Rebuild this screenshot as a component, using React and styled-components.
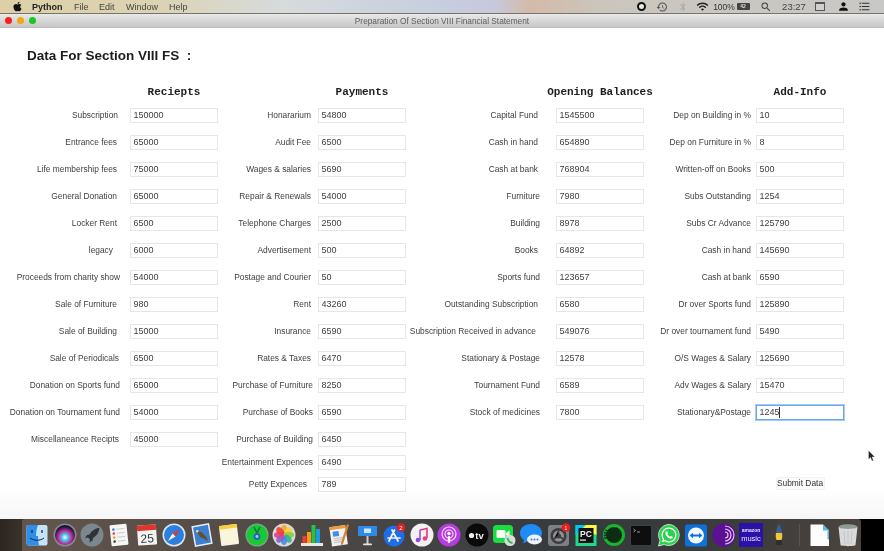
import React from "react";
import styled, { createGlobalStyle } from "styled-components";
import { FaApple } from "react-icons/fa";
import { MdBluetooth, MdWifi, MdHistory, MdSearch, MdPerson, MdFormatListBulleted } from "react-icons/md";

const Global = createGlobalStyle`
  html, body { margin: 0; padding: 0; background: #fff; overflow: hidden; }
  * { box-sizing: border-box; }
`;

const Screen = styled.div`
  width: 884px;
  height: 551px;
  display: flex;
  flex-direction: column;
  overflow: hidden;
  position: relative;
  font-family: "Liberation Sans", Arial, sans-serif;
  filter: blur(0.5px);
`;

const MenuBar = styled.header`
  height: 14px;
  flex: none;
  display: flex;
  align-items: center;
  justify-content: space-between;
  font-size: 9px;
  color: #333;
  background: linear-gradient(90deg, #ddd0a6 0%, #dcd3b4 18%, #d6dbdc 32%, #c6cede 50%, #c8c8dc 56%, #d3baa8 60%, #cbc6bd 68%, #c8c8c6 100%);
  border-bottom: 1px solid #77746c;
`;

const MenuLeft = styled.nav`
  display: flex;
  align-items: center;
  padding-left: 12px;
`;

const MenuItem = styled.span`
  width: ${(p) => p.$w}px;
  font-weight: ${(p) => (p.$bold ? 700 : 400)};
  color: ${(p) => (p.$bold ? "#222" : "#444")};
  white-space: nowrap;
`;

const AppleSlot = styled.span`
  width: 20px;
  display: flex;
  color: #111;
  font-size: 11px;
`;

const Tray = styled.div`
  display: flex;
  align-items: center;
  padding-right: 10px;
`;

const TrayItem = styled.span`
  width: ${(p) => p.$w}px;
  margin-left: ${(p) => p.$ml || 0}px;
  display: flex;
  align-items: center;
  justify-content: center;
  color: ${(p) => p.$color || "#333"};
  font-size: ${(p) => p.$fs || 9}px;
  white-space: nowrap;
`;

const RecordDot = styled.span`
  width: 9px;
  height: 9px;
  border-radius: 50%;
  border: 2.5px solid #111;
  background: #e8e8e8;
`;

const Battery = styled.span`
  width: 13px;
  height: 7px;
  background: #444;
  border-radius: 1px;
  color: #ddd;
  font-size: 5px;
  font-weight: 700;
  line-height: 7px;
  text-align: center;
`;

const BoxIcon = styled.span`
  width: 10px;
  height: 9px;
  border: 1px solid #555;
  border-top-width: 2.5px;
  background: #d0d0d0;
`;

const TitleBar = styled.div`
  height: 14px;
  flex: none;
  display: grid;
  grid-template-columns: 1fr auto 1fr;
  align-items: center;
  background: linear-gradient(#e9e9e9, #c6c6c6);
  border-bottom: 1px solid #bdbdbd;
`;

const Lights = styled.div`
  display: flex;
  gap: 5px;
  padding-left: 4.5px;
`;

const Light = styled.span`
  width: 7px;
  height: 7px;
  border-radius: 50%;
  background: ${(p) => p.$c};
`;

const WindowTitle = styled.div`
  font-size: 8.3px;
  color: #5c5c5c;
  white-space: nowrap;
`;

const Content = styled.main`
  flex: 1;
  min-height: 0;
  background: linear-gradient(#fff 0, #fff 94%, #f6f6f6 100%);
  position: relative;
`;

const PageTitle = styled.h1`
  margin: 20px 0 0 27px;
  height: 16px;
  font-size: 13.5px;
  line-height: 16px;
  font-weight: 700;
  color: #1c1c1c;
  white-space: pre;
`;

const Form = styled.form`
  display: flex;
  margin-top: 20px;
`;

const Column = styled.section`
  display: flex;
  flex-direction: column;
  width: ${(p) => p.$label + 88}px;
`;

const Heading = styled.h2`
  margin: 0 0 1.5px ${(p) => p.$label - 20}px;
  width: 128px;
  height: 16px;
  text-align: center;
  font-family: "Liberation Mono", "Courier New", monospace;
  font-size: 11px;
  line-height: 16px;
  font-weight: 700;
  color: #1e1e1e;
  white-space: nowrap;
`;

const Row = styled.div`
  display: grid;
  grid-template-columns: ${(p) => p.$label}px 88px;
  height: ${(p) => p.$h || 27}px;
  align-items: center;
  margin-top: ${(p) => p.$mt || 0}px;
`;

const Label = styled.label`
  justify-self: end;
  padding-right: ${(p) => p.$pad}px;
  font-size: 8.4px;
  color: #3e3e3e;
  white-space: nowrap;
`;

const FieldWrap = styled.div`
  position: relative;
  height: 15px;
`;

const Field = styled.input`
  display: block;
  width: 88px;
  height: 15px;
  padding: 0 2.5px;
  border: 1px solid ${(p) => (p.$focus ? "#6aa8ec" : "#e6e6e6")};
  box-shadow: ${(p) => (p.$focus ? "0 0 0 1px #a5cbf3" : "none")};
  outline: none;
  background: #fff;
  font-family: "Liberation Sans", Arial, sans-serif;
  font-size: 9px;
  color: #3e3e3e;
`;

const Caret = styled.span`
  position: absolute;
  left: 23px;
  top: 2px;
  width: 1px;
  height: 11px;
  background: #333;
`;

const SubmitRow = styled.div`
  display: flex;
  justify-content: center;
  margin: 51px 0 0 ${(p) => p.$label}px;
  width: 88px;
`;

const Submit = styled.button`
  height: 13px;
  width: 49px;
  padding: 0;
  border: 1px solid #f2f2f2;
  border-radius: 2px;
  background: #fbfbfb;
  font-family: "Liberation Sans", Arial, sans-serif;
  font-size: 8.4px;
  color: #333;
  white-space: nowrap;
`;

const Pointer = styled.svg`
  position: absolute;
  left: 868px;
  top: 422px;
`;

const DockStrip = styled.footer`
  height: 32px;
  flex: none;
  display: flex;
  background: linear-gradient(90deg, #2c2621 0, #3a322b 22px, #000 861px);
`;

const Dock = styled.div`
  margin-left: 22px;
  flex: none;
  display: flex;
  align-items: flex-start;
  padding: 4px 0 0 1.3px;
  border-top-left-radius: 3px;
  border-top-right-radius: 3px;
  background: linear-gradient(90deg, #62554c 0%, #544c47 25%, #424243 50%, #343a3c 65%, #3c3c3b 85%, #4c443e 100%);
`;

const DockSlot = styled.div`
  width: 27.48px;
  height: 24px;
  display: flex;
  justify-content: center;
  flex: none;
`;

const DockDivider = styled.div`
  width: 1px;
  height: 22px;
  margin: 1px 6.5px 0;
  background: #555;
  flex: none;
`;

const Ico = ({ children }) => (
  <svg width="24" height="24" viewBox="0 0 24 24">{children}</svg>
);

const icons = [
  <Ico key="finder">
    <rect x="1.5" y="2" width="21" height="20.5" rx="2" fill="#c5e3f8" />
    <path d="M3.5 2H13c-1.5 4-2 7-2 11h2c0 3 .3 6 1 9.5H3.5a2 2 0 0 1-2-2V4a2 2 0 0 1 2-2z" fill="#2f8eea" />
    <path d="M7 7v3M17 7v3" stroke="#123" strokeWidth="1.2" />
    <path d="M5 15c4 3 10 3 14 0" stroke="#123" strokeWidth="1" fill="none" />
  </Ico>,
  <Ico key="siri">
    <defs>
      <radialGradient id="sg" cx="50%" cy="62%" r="55%">
        <stop offset="0" stopColor="#fff" />
        <stop offset=".3" stopColor="#3ec7e8" />
        <stop offset=".6" stopColor="#c42ca0" />
        <stop offset="1" stopColor="#151530" />
      </radialGradient>
    </defs>
    <circle cx="12" cy="12" r="11.5" fill="#8b8790" />
    <circle cx="12" cy="12" r="10" fill="url(#sg)" />
  </Ico>,
  <Ico key="launch">
    <circle cx="12" cy="12" r="11.5" fill="#7b878d" />
    <path d="M18.5 5c-4 .6-7 3-9 6.5L7 12l-2 3 3-.5 2 2-.5 3 3-2 .5-2.5c3.5-2 5.7-5 6.5-10z" fill="#2d3439" />
  </Ico>,
  <Ico key="reminders">
    <g transform="rotate(-6 12 12)">
      <rect x="3.5" y="1.5" width="17" height="21" rx="1" fill="#f6f6f6" />
      <circle cx="7" cy="6" r="1.3" fill="#3a7ee0" />
      <circle cx="7" cy="10" r="1.3" fill="#e0443a" />
      <circle cx="7" cy="14" r="1.3" fill="#ef9a2a" />
      <circle cx="7" cy="18" r="1.3" fill="#333" />
      <path d="M10 6h8M10 10h8M10 14h8M10 18h8" stroke="#bbb" strokeWidth=".7" />
    </g>
  </Ico>,
  <Ico key="cal">
    <g transform="rotate(-4 12 12)">
      <rect x="2.5" y="2" width="19" height="20" rx="1" fill="#f4f4f4" />
      <path d="M2.5 3a1 1 0 0 1 1-1h17a1 1 0 0 1 1 1v4.500h-19z" fill="#e3342c" />
      <text x="12" y="19.500" textAnchor="middle" fontSize="12" fontFamily="Liberation Sans" fill="#333">25</text>
    </g>
  </Ico>,
  <Ico key="safari">
    <circle cx="12" cy="12" r="11.500" fill="#dfe6ee" />
    <circle cx="12" cy="12" r="10" fill="#2c7fe0" />
    <path d="M18 6l-7.500 4.500L12 12z" fill="#f0352c" />
    <path d="M18 6l-4.500 7.500L12 12z" fill="#e8312a" />
    <path d="M6 18l4.500-7.500L13.500 13.500z" fill="#f4f4f4" />
  </Ico>,
  <Ico key="preview">
    <g transform="rotate(-10 12 12)">
      <rect x="3" y="1.500" width="18" height="21" fill="#e8eef6" />
      <rect x="4.500" y="3" width="15" height="18" fill="#3b7fd0" />
      <path d="M7 7l5 2 4 6 1 4-5-4-2-1-2-5z" fill="#6a4c2e" />
      <circle cx="8" cy="7.500" r="1.300" fill="#e8dcc0" />
    </g>
  </Ico>,
  <Ico key="notes">
    <g transform="rotate(-7 12 12)">
      <rect x="3" y="2" width="18" height="20" rx="1" fill="#faf6dc" />
      <path d="M3 3a1 1 0 0 1 1-1h16a1 1 0 0 1 1 1v2.500H3z" fill="#f5cf3c" />
    </g>
  </Ico>,
  <Ico key="green">
    <circle cx="12" cy="12" r="11.500" fill="#7fa38a" />
    <circle cx="12" cy="12" r="10.300" fill="#14cc32" />
    <path d="M9 4l3 6 3-6" stroke="#1c6f3a" strokeWidth="1.500" fill="none" />
    <circle cx="12" cy="13.500" r="3.500" fill="#2f62c4" />
    <circle cx="12" cy="13.500" r="1.400" fill="#9fd0ee" />
  </Ico>,
  <Ico key="photos">
    <circle cx="12" cy="12" r="11.500" fill="#dcd8d6" />
    {["#f5a623", "#f7d13c", "#8ccb3f", "#36b38a", "#3f8fe0", "#8a5cd0", "#e03f8f", "#ee3f3a"].map((c, i) => (
      <ellipse key={c} cx="12" cy="6.800" rx="3" ry="4.800" fill={c} opacity=".9" transform={`rotate(${i * 45} 12 12)`} />
    ))}
  </Ico>,
  <Ico key="numbers">
    <path d="M1 20h22v3H1z" fill="#e8e8e8" />
    <rect x="2.500" y="13" width="4" height="7" fill="#f03c2e" />
    <rect x="7" y="9" width="4" height="11" fill="#f59a1f" />
    <rect x="11.500" y="2" width="4" height="18" fill="#25c244" />
    <rect x="16" y="6" width="4" height="14" fill="#1f9ae0" />
  </Ico>,
  <Ico key="pages">
    <g transform="rotate(-8 12 12)">
      <rect x="3.500" y="3" width="16" height="19.500" fill="#f2f2f2" />
      <path d="M3.500 3h16v3h-16z" fill="#ed9a3c" />
      <rect x="6" y="8" width="6" height="5" fill="#3f8fe0" />
      <path d="M6 15h11M6 17h11M6 19h8" stroke="#aaa" strokeWidth=".7" />
    </g>
    <path d="M22 2L16 21l-1.500 2 -.5-3L20 1z" fill="#d9822b" />
  </Ico>,
  <Ico key="keynote">
    <rect x="3" y="3" width="19" height="10" fill="#2c8be8" />
    <rect x="9" y="5.500" width="7" height="4.500" fill="#cfe4f7" />
    <rect x="11.500" y="13" width="2" height="8" fill="#c8ccd0" />
    <rect x="8" y="20.500" width="9" height="1.800" rx=".8" fill="#e4e4e4" />
  </Ico>,
  <Ico key="appstore">
    <circle cx="12" cy="13" r="10.500" fill="#1c6fe8" />
    <path d="M12.500 7L7 18M10 7l6 11M6 15h12" stroke="#f4f4f4" strokeWidth="1.700" strokeLinecap="round" fill="none" />
    <circle cx="19" cy="4.500" r="4.300" fill="#e0201c" />
    <text x="19" y="6.800" textAnchor="middle" fontSize="6" fontFamily="Liberation Sans" fill="#fff">2</text>
  </Ico>,
  <Ico key="music">
    <circle cx="12" cy="12" r="11.500" fill="#f2f2f4" />
    <path d="M10 7l7-1.500V15" stroke="#e43a7a" strokeWidth="1.600" fill="none" />
    <path d="M10 7v10" stroke="#a04ae0" strokeWidth="1.600" />
    <circle cx="8" cy="17" r="2.300" fill="#8a4ae0" />
    <circle cx="15" cy="15.500" r="2.300" fill="#e8407a" />
  </Ico>,
  <Ico key="podcast">
    <circle cx="12" cy="12" r="11.500" fill="#b43be0" />
    <circle cx="12" cy="11" r="7" fill="none" stroke="#f3dcfa" strokeWidth="1.200" />
    <circle cx="12" cy="11" r="4" fill="none" stroke="#f3dcfa" strokeWidth="1.200" />
    <circle cx="12" cy="10.500" r="1.700" fill="#fff" />
    <rect x="10.800" y="13" width="2.400" height="7" rx="1.200" fill="#fff" />
  </Ico>,
  <Ico key="tv">
    <circle cx="12" cy="12" r="11.500" fill="#0a0a0a" />
    <text x="14.500" y="15.500" textAnchor="middle" fontSize="9.500" fontWeight="700" fontFamily="Liberation Sans" fill="#eee">tv</text>
    <circle cx="6.500" cy="12.500" r="2.600" fill="#eee" />
  </Ico>,
  <Ico key="facetime">
    <rect x="1" y="2" width="20" height="18" rx="3.500" fill="#1ddc42" />
    <rect x="4.500" y="7" width="9" height="8" rx="1.500" fill="#f6fff6" />
    <path d="M14 10l3.500-2.500v7L14 12z" fill="#f6fff6" />
    <circle cx="18" cy="17.500" r="5.500" fill="#dcdcdc" />
    <path d="M15.500 15c.5 3 2 4.500 5 5" stroke="#2dba50" strokeWidth="1.800" fill="none" />
  </Ico>,
  <Ico key="messages">
    <path d="M12 1C5.500 1 1 5 1 10c0 3 1.500 5.500 4 7l-1 3.500 5-2.500c1 .2 2 .3 3 .3 6.500 0 11-3.800 11-8.300S18.500 1 12 1z" fill="#1f8cf5" />
    <ellipse cx="15.500" cy="16.500" rx="7.500" ry="5" fill="#eef3fb" />
    <circle cx="12.500" cy="16.500" r="1" fill="#3a7ed8" />
    <circle cx="15.500" cy="16.500" r="1" fill="#3a7ed8" />
    <circle cx="18.500" cy="16.500" r="1" fill="#3a7ed8" />
  </Ico>,
  <Ico key="sysprefs">
    <rect x="1" y="2" width="21" height="21" rx="3" fill="#7d7f83" />
    <circle cx="11.500" cy="13" r="8" fill="#3a3b3d" />
    <circle cx="11.500" cy="13" r="5.500" fill="#8f9094" />
    <circle cx="11.500" cy="13" r="2.500" fill="#3a3b3d" />
    <path d="M11.500 7.500v5.500L6.800 16M11.500 13l4.800 3" stroke="#3a3b3d" strokeWidth="1.500" />
    <circle cx="19" cy="4.500" r="4.300" fill="#ee1c1c" />
    <text x="19" y="6.500" textAnchor="middle" fontSize="5" fontFamily="Liberation Sans" fill="#fff">1</text>
  </Ico>,
  <Ico key="pycharm">
    <rect x="1.500" y="2" width="21" height="21" fill="#21d789" />
    <path d="M1.500 2h21v10z" fill="#fcf84a" />
    <path d="M1.500 2v10L12 2z" fill="#07c3f2" />
    <rect x="4.500" y="5" width="15" height="15" fill="#111" />
    <text x="12" y="13.500" textAnchor="middle" fontSize="8.500" fontWeight="700" fontFamily="Liberation Sans" fill="#f2f2f2">PC</text>
    <rect x="6" y="16.500" width="6" height="1.200" fill="#eee" />
  </Ico>,
  <Ico key="ring">
    <circle cx="12" cy="12" r="9.500" fill="#0c2c14" stroke="#17b52e" strokeWidth="3" />
    <path d="M5 7a9.500 9.500 0 0 0-1 9" stroke="#0c3a18" strokeWidth="3" strokeDasharray="1.500 1" fill="none" />
  </Ico>,
  <Ico key="terminal">
    <rect x="1" y="2" width="22" height="21" rx="2" fill="#3c4044" />
    <rect x="2" y="3" width="20" height="19" rx="1" fill="#0e0e0e" />
    <path d="M4.500 6l2 1.500-2 1.500M8 9h3" stroke="#bbb" strokeWidth=".8" fill="none" />
  </Ico>,
  <Ico key="whatsapp">
    <path d="M12 1.500a10.500 10.500 0 0 0-9 15.800L1.500 23l5.700-1.500A10.500 10.500 0 1 0 12 1.500z" fill="#2bd24f" stroke="#e8f6ea" strokeWidth=".8" />
    <path d="M12 4.500a7.500 7.500 0 0 0-6.200 11.700l-.9 3 3-.9A7.500 7.500 0 1 0 12 4.500z" fill="#fff" />
    <path d="M12 5.800a6.200 6.200 0 0 0-5 9.900l-.4 1.700 1.700-.5A6.200 6.200 0 1 0 12 5.800z" fill="#2bd24f" />
    <path d="M9 8.500c-1 1-.8 2.600.6 4.500 1.500 2 3.500 3 5 2.600.8-.3 1.200-1 1.200-1.700l-2-1-.8.8c-1-.3-2.300-1.600-2.700-2.600l.7-.8-.9-2z" fill="#fff" />
  </Ico>,
  <Ico key="teamviewer">
    <rect x="1" y="1.500" width="22" height="22" rx="2" fill="#0e70d8" />
    <circle cx="12" cy="12.500" r="8" fill="#f4f8fd" />
    <path d="M5.500 12.500l3.500-2.800v1.800h6V9.700l3.500 2.800-3.500 2.800v-1.800H9v1.800z" fill="#0e70d8" />
  </Ico>,
  <Ico key="tor">
    <circle cx="12" cy="12" r="11.500" fill="#5d0f96" />
    <path d="M13 3a9 9 0 0 1 0 18M13 6a6 6 0 0 1 0 12M13 9a3 3 0 0 1 0 6" stroke="#e4c6f2" strokeWidth="1.200" fill="none" />
  </Ico>,
  <Ico key="amazon">
    <rect x="0" y="0" width="24" height="24" fill="#2c11a8" />
    <text x="12" y="8.500" textAnchor="middle" fontSize="5" fontWeight="700" fontFamily="Liberation Sans" fill="#e8e4ff">amazon</text>
    <text x="12" y="18" textAnchor="middle" fontSize="7.500" fontFamily="Liberation Sans" fill="#e8e4ff">music</text>
  </Ico>,
  <Ico key="python">
    <path d="M12 1c-1.500 2-3 6-3 9h6c0-3-1.500-7-3-9z" fill="#39618e" />
    <path d="M9 10h6c.6 3 .2 5-.5 7h-5c-.7-2-1.100-4-.5-7z" fill="#f0c83c" />
    <path d="M9.500 17h5l.8 5h-6.600z" fill="#2e2e2e" />
  </Ico>,
];

const fileIcons = [
  <Ico key="file">
    <path d="M2.500 1.500H15l6 6v15.500H2.500z" fill="#fdfdfd" />
    <path d="M15 1.500l6 6h-6z" fill="#58b4ea" />
    <path d="M21 7.500v9l-1.500-.5V7.500z" fill="#58b4ea" />
  </Ico>,
  <Ico key="trash">
    <ellipse cx="12" cy="4" rx="9.500" ry="2.800" fill="#8f9a94" />
    <path d="M2.500 4c1.500 2.500 17.500 2.500 19 0l-2 18c-.2 1.500-14.800 1.500-15 0z" fill="#d9dadb" />
    <path d="M8 8l1 13M12 8v13M16 8l-1 13" stroke="#b8babc" strokeWidth=".7" />
  </Ico>,
];

const L1 = 130, L2 = 100, L3 = 150, L4 = 112;

const receipts = [
  ["Subscription", "150000", 12], ["Entrance fees", "65000", 13], ["Life membership fees", "75000", 13],
  ["General Donation", "65000", 13], ["Locker Rent", "6500", 13], ["legacy", "6000", 17],
  ["Proceeds from charity show", "54000", 10], ["Sale of Furniture", "980", 13], ["Sale of Building", "15000", 13],
  ["Sale of Periodicals", "6500", 11], ["Donation on Sports fund", "65000", 10], ["Donation on Tournament fund", "54000", 10],
  ["Miscellaneance Recipts", "45000", 11],
];

const payments = [
  ["Honararium", "54800", 7], ["Audit Fee", "6500", 7], ["Wages & salaries", "5690", 7], ["Repair & Renewals", "54000", 7],
  ["Telephone Charges", "2500", 7], ["Advertisement", "500", 7], ["Postage and Courier", "50", 7], ["Rent", "43260", 7],
  ["Insurance", "6590", 7], ["Rates & Taxes", "6470", 7], ["Purchase of Furniture", "8250", 5], ["Purchase of Books", "6590", 5],
  ["Purchase of Building", "6450", 5], ["Entertainment Expences", "6490", 5, 19], ["Petty Expences", "789", 11, 25],
];

const opening = [
  ["Capital Fund", "1545500", 18], ["Cash in hand", "654890", 18], ["Cash at bank", "768904", 18], ["Furniture", "7980", 16],
  ["Building", "8978", 16], ["Books", "64892", 18], ["Sports fund", "123657", 16], ["Outstanding Subscription", "6580", 18],
  ["Subscription Received in advance", "549076", 20], ["Stationary & Postage", "12578", 16], ["Tournament Fund", "6589", 16],
  ["Stock of medicines", "7800", 16],
];

const addInfo = [
  ["Dep on Building in %", "10", 5], ["Dep on Furniture in %", "8", 5], ["Written-off on Books", "500", 5], ["Subs Outstanding", "1254", 5],
  ["Subs Cr Advance", "125790", 5], ["Cash in hand", "145690", 5], ["Cash at bank", "6590", 5], ["Dr over Sports fund", "125890", 5],
  ["Dr over tournament fund", "5490", 5], ["O/S Wages & Salary", "125690", 5], ["Adv Wages & Salary", "15470", 5],
  ["Stationary&Postage", "1245", 5, 27, true],
];

const DataColumn = ({ title, label, rows, children }) => (
  <Column $label={label}>
    <Heading $label={label}>{title}</Heading>
    {rows.map(([text, value, pad, h, focus]) => (
      <Row key={text} $label={label} $h={h}>
        <Label $pad={pad}>{text}</Label>
        <FieldWrap>
          <Field defaultValue={value} readOnly $focus={focus} />
          {focus && <Caret />}
        </FieldWrap>
      </Row>
    ))}
    {children}
  </Column>
);

export default function App() {
  return (
    <Screen>
      <Global />
      <MenuBar>
        <MenuLeft>
          <AppleSlot><FaApple /></AppleSlot>
          <MenuItem $bold $w={42}>Python</MenuItem>
          <MenuItem $w={25}>File</MenuItem>
          <MenuItem $w={27}>Edit</MenuItem>
          <MenuItem $w={43}>Window</MenuItem>
          <MenuItem $w={24}>Help</MenuItem>
        </MenuLeft>
        <Tray>
          <TrayItem $w={20}><RecordDot /></TrayItem>
          <TrayItem $w={22} $fs={12} $color="#555"><MdHistory /></TrayItem>
          <TrayItem $w={20} $fs={10} $color="#aaa"><MdBluetooth /></TrayItem>
          <TrayItem $w={19} $fs={13} $color="#222"><MdWifi /></TrayItem>
          <TrayItem $w={22} $ml={1} $fs={8.5}>100%</TrayItem>
          <TrayItem $w={16}><Battery>42</Battery></TrayItem>
          <TrayItem $w={20} $ml={5} $fs={12} $color="#444"><MdSearch /></TrayItem>
          <TrayItem $w={32} $ml={2} $fs={9.5} $color="#444">23:27</TrayItem>
          <TrayItem $w={20} $ml={0}><BoxIcon /></TrayItem>
          <TrayItem $w={20} $ml={3} $fs={13} $color="#111"><MdPerson /></TrayItem>
          <TrayItem $w={20} $ml={1} $fs={13} $color="#333"><MdFormatListBulleted /></TrayItem>
        </Tray>
      </MenuBar>
      <TitleBar>
        <Lights>
          <Light $c="#f8201c" />
          <Light $c="#f5a70c" />
          <Light $c="#18c826" />
        </Lights>
        <WindowTitle>Preparation Of Section VIII Financial Statement</WindowTitle>
      </TitleBar>
      <Content>
        <PageTitle>{"Data For Section VIII FS  :"}</PageTitle>
        <Form onSubmit={(e) => e.preventDefault()}>
          <DataColumn title="Reciepts" label={L1} rows={receipts} />
          <DataColumn title="Payments" label={L2} rows={payments} />
          <DataColumn title="Opening Balances" label={L3} rows={opening} />
          <DataColumn title="Add-Info" label={L4} rows={addInfo}>
            <SubmitRow $label={L4}>
              <Submit type="submit">Submit Data</Submit>
            </SubmitRow>
          </DataColumn>
        </Form>
        <Pointer width="7" height="12" viewBox="0 0 7 12">
          <path d="M.5.500v9l2-2 1.500 3.500 1.500-.6L4 7h2.800z" fill="#222" stroke="#eee" strokeWidth=".4" />
        </Pointer>
      </Content>
      <DockStrip>
        <Dock>
          {icons.map((icon) => (
            <DockSlot key={icon.key}>{icon}</DockSlot>
          ))}
          <DockDivider />
          {fileIcons.map((icon) => (
            <DockSlot key={icon.key}>{icon}</DockSlot>
          ))}
        </Dock>
      </DockStrip>
    </Screen>
  );
}
